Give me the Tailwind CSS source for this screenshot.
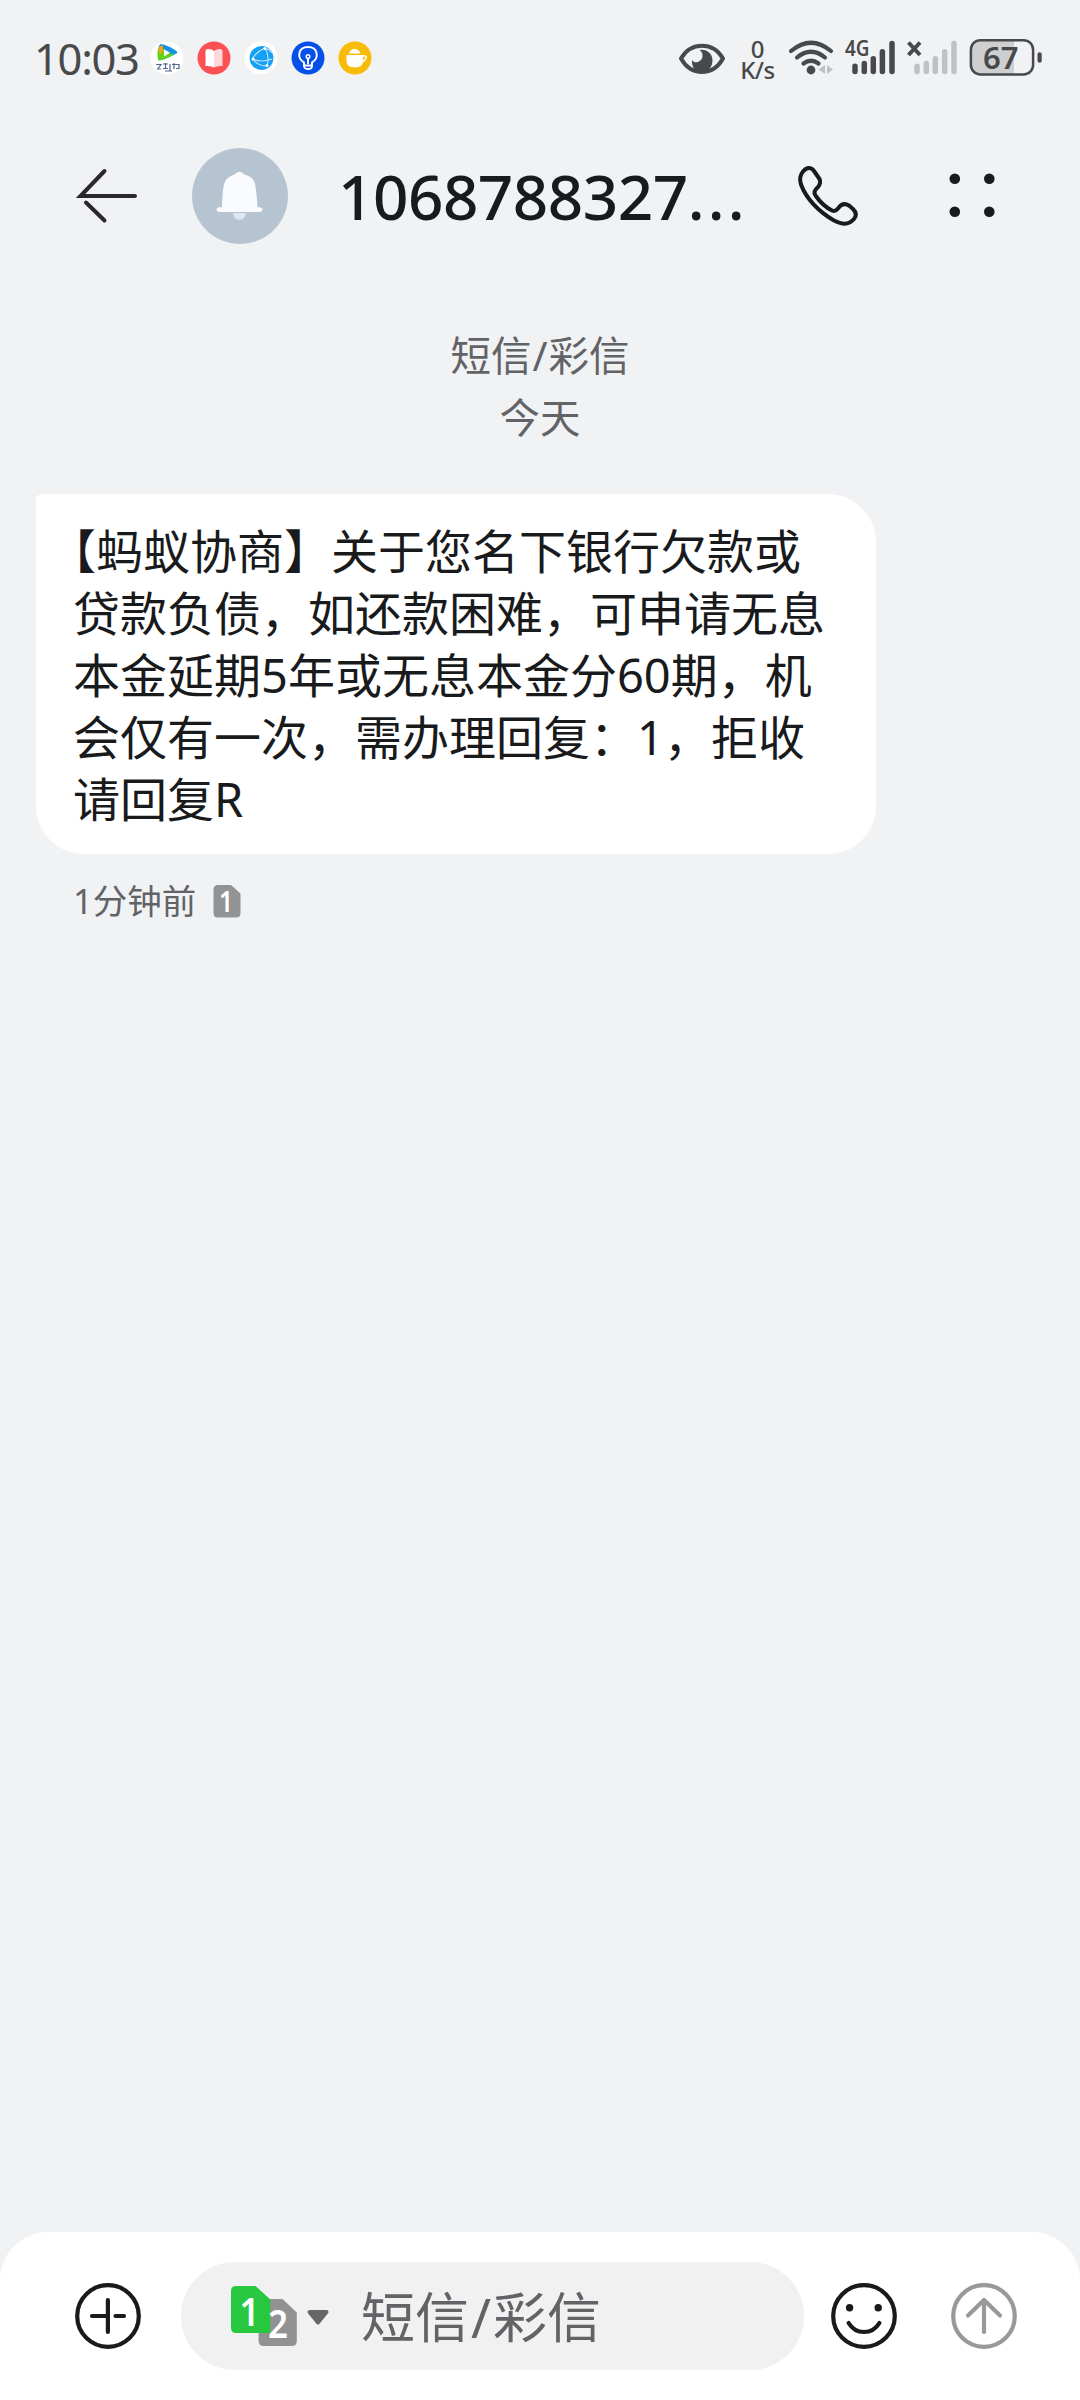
<!DOCTYPE html>
<html lang="zh-CN">
<head>
<meta charset="utf-8">
<title>短信</title>
<script src="https://cdn.jsdelivr.net/npm/@tailwindcss/browser@4"></script>
</head>
<body class="w-[1080px] h-[2400px] overflow-hidden bg-[#f1f2f4] font-['Noto_Sans','Noto_Sans_CJK_SC',sans-serif] text-[#191a1c] flex flex-col">

<!-- status bar -->
<header class="h-[116px] flex items-center justify-between pl-[34px] pr-[36px] text-[#48494b]">
  <div class="flex items-center">
    <span class="text-[43.5px] leading-none tracking-[-1.3px] w-[116px] pt-[2px] whitespace-nowrap">10:03</span>
    <div class="flex gap-[13px]">
      <svg class="size-[34px]" viewBox="0 0 34 34"><circle cx="17" cy="17" r="16.5" fill="#fff"/><path d="M10 3.500C8 4 7.800 17 8.500 19C10 21 27 13 27.500 11.500C27 9 12 2.500 10 3.500Z" fill="#12a5dc"/><path d="M8 8C7 13 7.500 18 9 19.500C11 20 22 15 24 13L13 8Z" fill="#63d315"/><path d="M10 3.500C14 2 25 8.500 27.500 11.500L21 13L12 7.500Z" fill="#1593de"/><path d="M8.200 6.500L12.500 4L13.500 9L10 14Z" fill="#f7a21b"/><path d="M14 8.200v7.200l6-3.600z" fill="#fff"/><path d="M6 23.500h5l-3 4M7 28h4M13 23h5M15.500 22v6M13 27.500h5M20 23v7M22 23.500h4M24 22v6M26 23.500h3v4h-3M15 30h7" stroke="#52658f" stroke-width="1.200" fill="none"/></svg>
      <svg class="size-[34px]" viewBox="0 0 34 34"><circle cx="17" cy="17" r="16.500" fill="#fc5055"/><path d="M8.500 10Q8.500 8 11 8Q15 8 17 10V26.500Q14 24.500 8.500 25Z" fill="#fff"/><path d="M25.500 10Q25.500 8 23 8Q19 8 17 10V26.500Q20 24.500 25.500 25Z" fill="#ffd9da"/></svg>
      <svg class="size-[34px]" viewBox="0 0 34 34"><circle cx="17" cy="17" r="16.500" fill="#fff"/><circle cx="17.500" cy="17" r="11.900" fill="#13a0f5"/><path d="M21 7Q12 11 8.500 18M21 7Q26 15 23 25M8.500 18Q17 22 28 18M8.500 18Q14 25 23 25M21 7Q25 8 28 12" fill="none" stroke="#c5e8ff" stroke-width="1.100"/><circle cx="21" cy="7.500" r="1.500" fill="#fff"/><circle cx="9" cy="18" r="1.500" fill="#fff"/><circle cx="23" cy="24.500" r="1.500" fill="#fff"/></svg>
      <svg class="size-[34px]" viewBox="0 0 34 34"><circle cx="17" cy="17" r="16.500" fill="#0650ea"/><path d="M13 25V21.500C5.500 17 7 6 17 6S28.500 17 21 21.500V25C21 29 13 29 13 25ZM13 24.500H21M17 23V17" fill="none" stroke="#fff" stroke-width="1.900"/><circle cx="17" cy="15.500" r="1.800" fill="none" stroke="#fff" stroke-width="1.500"/></svg>
      <svg class="size-[34px]" viewBox="0 0 34 34"><circle cx="17" cy="17" r="16.500" fill="#f7bb08"/><path d="M8.500 14H25V20Q25 26.500 17 26.500Q8.500 26.500 8.500 20ZM11 12.500Q12 8 16.500 8Q21 8 22.500 12.500Z" fill="#fff"/><path d="M24.500 15H27Q28.500 15 28 17Q27 20 24 21" fill="none" stroke="#fff" stroke-width="1.700"/></svg>
    </div>
  </div>
  <div class="flex items-center">
    <svg class="w-[60px] h-[60px]" viewBox="676 28 60 60"><path d="M681 58.500C691 41.500 713 41.500 723 58.500C713 76.500 691 76.500 681 58.500Z" fill="none" stroke="#48494b" stroke-width="4" stroke-linejoin="round"/><path d="M699.500 50C706 48.500 712.500 53 712.500 60.500C712.500 67 708 72 702 72C695 72 691.500 67 692 60C695 65 703 61 702.500 55.500Q702.500 52 699.500 50Z" fill="#48494b"/></svg>
    <div class="w-[45px] -ml-px mr-px text-center text-[24px] leading-[21px] pt-px font-medium"><div>0</div><div class="tracking-[-0.5px]">K/s</div></div>
    <svg class="w-[63px] h-[60px]" viewBox="781 28 63 60" fill="none" stroke="#48494b" stroke-width="4.200" stroke-linecap="round"><path d="M791 51Q811 34.500 831 51M797 57.500Q811 46 825 57.500M803.500 63.500Q811 58 818.500 63.500"/><circle cx="811" cy="70" r="4.400" fill="#48494b" stroke="none"/><path d="M825 65V74L818.500 69.500ZM827 65V74L833 69.500Z" fill="#c0c1c3" stroke="none"/></svg>
    <svg class="w-[56px] h-[60px]" viewBox="844 28 56 60"><text x="845" y="56.300" font-size="21" font-weight="600" textLength="24.500" lengthAdjust="spacingAndGlyphs" fill="#48494b">4G</text><path d="M855 66.200V71.600M864.300 63.500V71.600M873.300 58.800V71.600M882.400 51.700V71.600M892 43.500V71.600" stroke="#48494b" stroke-width="5.500" stroke-linecap="round"/></svg>
    <svg class="w-[62px] h-[60px]" viewBox="900 28 62 60"><path d="M908.500 42.500L920 55M920 42.500L908.500 55" stroke="#48494b" stroke-width="4"/><path d="M917 66.200V71.600M926.300 63.500V71.600M935.300 58.800V71.600M944.700 51.700V71.600M954 43.500V71.600" stroke="#c0c1c3" stroke-width="5.500" stroke-linecap="round"/></svg>
    <svg class="w-[82px] h-[60px]" viewBox="962 28 82 60"><path d="M1014 41V74H980Q971.500 74 971.500 65V50Q971.500 41 980 41Z" fill="#cecfd1"/><rect x="970.900" y="40.200" width="62.200" height="34.300" rx="9.500" fill="none" stroke="#48494b" stroke-width="2.500"/><rect x="1037.500" y="52.300" width="4.200" height="10.500" rx="2" fill="#48494b"/><text x="983" y="68.800" font-size="31" font-weight="600" textLength="35.500" lengthAdjust="spacingAndGlyphs" fill="#48494b">67</text></svg>
  </div>
</header>

<!-- conversation header -->
<div class="h-[160px] flex items-center">
  <svg class="w-[192px] h-[100px] shrink-0" viewBox="0 146 192 100" fill="none" stroke="#29292b" stroke-width="4" stroke-linecap="round"><path d="M135 196H80.500L104.500 171M104.500 220.500L86 202.500"/></svg>
  <svg class="size-24 shrink-0" viewBox="192 148 96 96"><circle cx="240" cy="196" r="48" fill="#b6c4d2"/><path d="M233 213H246Q245 220 239.500 220Q234 220 233 213Z" fill="#dce7f2"/><path d="M219 207.200H222Q222.500 184 226 180Q229 176 234.500 174.500Q239.500 169 244.500 174.500Q251 176 254 181Q256 184 257.500 207.200H260Q262.500 207.500 262.500 209.600Q262.500 212 260 212H219Q216.500 212 216.500 209.600Q216.500 207.500 219 207.200Z" fill="#f9fbfe"/></svg>
  <h1 class="ml-[50px] w-[440px] text-[62px] leading-none font-medium tracking-[-0.5px] whitespace-nowrap">1068788327<span class="tracking-[3.200px]">...</span></h1>
  <svg class="size-[84px] shrink-0 ml-[8px]" viewBox="786 154 84 84" fill="none" stroke="#191a1c" stroke-width="4" stroke-linejoin="round"><path d="M803 171.500C807 167 811 167 814 171L819.500 179C821 182 820 184.500 818 187C814.500 190 813.500 193 815.500 195.500C820 202 826 207.500 832 210.500C834 211.500 836 211 838 208.500C841 204 845 203 849 205.500L853 209C856.500 212.500 856.500 216 854 219C848 225.500 842 224.500 834 220.500C818 211.500 806 198 801 184.500C799.500 179.500 800 175 803 171.500Z"/></svg>
  <svg class="size-[84px] shrink-0 ml-[60px]" viewBox="930 154 84 84" fill="#191a1c"><circle cx="954.800" cy="178.700" r="5.300"/><circle cx="989.300" cy="178.700" r="5.300"/><circle cx="954.800" cy="211.700" r="5.300"/><circle cx="989.300" cy="211.700" r="5.300"/></svg>
</div>

<!-- messages -->
<main class="flex-1 flex flex-col items-start pt-[49px]">
  <div class="w-full text-center text-[40.500px] leading-[62px] text-[#626366]"><div>短信<span class="px-[1px]">/</span>彩信</div><div>今天</div></div>
  <div class="ml-9 mt-[45px] w-[840px] h-[360px] bg-white rounded-[48px] rounded-tl-[6px] pl-[37px] pt-[26px] text-[47px] leading-[62px] whitespace-nowrap indent-[-24px]">【蚂蚁协商】关于您名下银行欠款或<div class="indent-0">贷款负债，如还款困难，可申请无息<br>本金延期5年或无息本金分60期，机<br>会仅有一次，需办理回复：1，拒收<br>请回复R</div></div>
  <div class="ml-[73px] mt-[22px] h-[50px] flex items-center text-[34.500px] leading-[50px] text-[#626366]">
    <span class="w-[140px] whitespace-nowrap">1分钟前</span>
    <svg class="w-[28px] h-[34px] overflow-visible" viewBox="0 0 28 34"><path d="M5 1H18L27.500 9.500V29Q27.500 33.500 23 33.500H5Q.5 33.500 .5 29V5.500Q.5 1 5 1Z" fill="#929395"/><text x="6" y="27.500" font-size="29" font-weight="600" textLength="14" lengthAdjust="spacingAndGlyphs" fill="#fff">1</text></svg>
  </div>
</main>

<!-- composer -->
<footer class="h-[168px] bg-white rounded-t-[48px] flex items-start pt-[30px]">
  <svg class="w-[181px] h-[108px] shrink-0" viewBox="0 2262 181 108" fill="none" stroke="#191a1c" stroke-width="4.200" stroke-linecap="round"><circle cx="108" cy="2316" r="30.800"/><path d="M92 2316H107.900M115.500 2316H124M107.900 2300V2332"/></svg>
  <div class="w-[623px] h-[108px] rounded-full bg-[#f1f1f1] flex items-center shrink-0">
    <svg class="w-[179px] h-[108px] shrink-0" viewBox="181 2262 179 108"><path d="M263 2299H282.500L296.800 2312.500V2341Q296.800 2346 292 2346H263.500Q258.600 2346 258.600 2341V2303Q258.600 2299 263 2299Z" fill="#929292"/><path d="M236 2286H255.500L270.300 2299.500V2333H236Q231 2333 231 2328V2291Q231 2286 236 2286Z" fill="#27c840"/><g fill="#fff" font-size="40" font-weight="600"><text x="239.500" y="2325.500" textLength="20" lengthAdjust="spacingAndGlyphs">1</text><text x="268" y="2338" textLength="20" lengthAdjust="spacingAndGlyphs">2</text></g><path d="M309.500 2312H326.500L318 2322.500Z" fill="#666" stroke="#666" stroke-width="4" stroke-linejoin="round"/></svg>
    <span class="ml-px pt-[2px] text-[54px] leading-[80px] text-[#626366] whitespace-nowrap">短信<span class="px-[2px]">/</span>彩信</span>
  </div>
  <svg class="w-[120px] h-[108px] shrink-0" viewBox="804 2262 120 108" fill="none" stroke="#191a1c" stroke-width="4.200" stroke-linecap="round"><circle cx="864" cy="2316" r="30.800"/><path d="M848.600 2323Q854 2332 864 2332Q874 2332 879.400 2323"/><g fill="#191a1c" stroke="none"><circle cx="849.600" cy="2307.700" r="3.700"/><circle cx="878.200" cy="2307.700" r="3.700"/></g></svg>
  <svg class="w-[120px] h-[108px] shrink-0" viewBox="924 2262 120 108" fill="none" stroke="#999" stroke-width="4.200" stroke-linecap="round" stroke-linejoin="round"><circle cx="984" cy="2316" r="30.800"/><path d="M984 2332V2300M968 2315.500L984 2300L1000 2315.500"/></svg>
</footer>
</body>
</html>
